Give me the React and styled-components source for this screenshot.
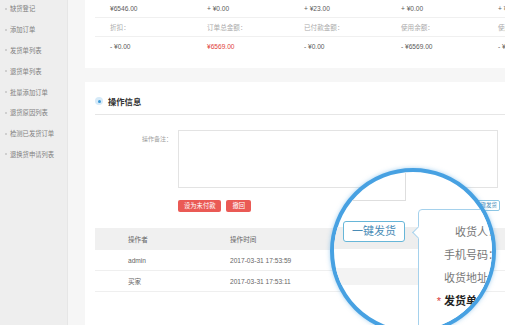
import React from 'react'
import styled, { createGlobalStyle } from 'styled-components'

const Global = createGlobalStyle`
  html, body {
    margin: 0;
    padding: 0;
    width: 505px;
    height: 325px;
    overflow: hidden;
    background: #f6f6f6;
    font-family: "Liberation Sans", "Noto Sans CJK SC", sans-serif;
  }
`

const Page = styled.div`
  position: relative;
  display: flex;
  width: 505px;
  height: 325px;
  overflow: hidden;
`

const Sidebar = styled.ul`
  width: 68px;
  flex: none;
  margin: 0;
  padding: 0;
  list-style: none;
  background: #eeeeee;
  box-shadow: inset -1px 0 0 #e6e6e6;
`

const NavItem = styled.li`
  display: flex;
  align-items: center;
  height: 20.8px;
  gap: 3px;
  padding-left: 5px;
  font-size: 6.3px;
  color: #808080;
  white-space: nowrap;
  &:first-child { margin-top: -1.5px; }
  &::before {
    content: '';
    width: 2px;
    height: 2px;
    border-radius: 50%;
    background: #c4c4c4;
  }
`

const Main = styled.div`
  flex: 1;
  min-width: 0;
  display: flex;
  flex-direction: column;
  padding-left: 17px;
  background: #f6f6f6;
  overflow: hidden;
`

const SummaryCard = styled.div`
  flex: none;
  height: 69px;
  margin-top: -1px;
  padding-left: 10px;
  background: #fff;
`

const SummaryRow = styled.div`
  display: grid;
  grid-template-columns: repeat(5, 97px);
  align-items: center;
  height: 18px;
  padding-left: 15px;
  border-bottom: 1px solid ${p => (p.$last ? 'transparent' : '#f0f0f0')};
  font-size: 6.6px;
  white-space: nowrap;
`

const Cell = styled.span`
  color: ${p => p.$tone === 'label' ? '#ababab' : p.$tone === 'red' ? '#e0403a' : '#5a5a5a'};
`

const OpsCard = styled.div`
  flex: 1;
  margin-top: 14px;
  padding-left: 10px;
  background: #fff;
`

const SectionHead = styled.div`
  display: flex;
  align-items: center;
  gap: 5px;
  height: 14px;
  padding: 12px 0 6px;
  border-bottom: 1px solid #e6e6e6;
  font-size: 8.3px;
  font-weight: bold;
  color: #333;
`

const HeadIcon = styled.span`
  width: 8px;
  height: 8px;
  border-radius: 50%;
  background: #d6eaf8;
  display: flex;
  align-items: center;
  justify-content: center;
  &::after {
    content: '';
    width: 3px;
    height: 3px;
    border-radius: 50%;
    background: #3c9ad8;
  }
`

const FormRow = styled.div`
  display: flex;
  gap: 6px;
  margin-top: 15px;
`

const FormLabel = styled.label`
  width: 77px;
  padding-top: 4px;
  text-align: right;
  font-size: 6px;
  color: #a0a0a0;
  white-space: nowrap;
`

const Remark = styled.div`
  width: 320px;
  height: 58px;
  border: 1px solid #e3e3e3;
  box-sizing: border-box;
`

const ActionRow = styled.div`
  display: flex;
  gap: 5px;
  width: 322px;
  margin-top: 12px;
  margin-left: 83px;
`

const RedButton = styled.button`
  height: 12px;
  padding: 0 6px;
  border: none;
  border-radius: 2px;
  background: #ea5a55;
  color: #fff;
  font-family: inherit;
  font-size: 6.3px;
  line-height: 12px;
`

const ShipButton = styled.button`
  margin-left: auto;
  height: 11px;
  padding: 0 2px;
  border: 1px solid #8cc6e4;
  border-radius: 2px;
  background: #fff;
  color: #4d91bb;
  font-family: inherit;
  font-size: 5.5px;
  line-height: 9px;
`

const LogTable = styled.div`
  margin-top: 16px;
  font-size: 6.6px;
  color: #666;
`

const LogRow = styled.div`
  display: grid;
  grid-template-columns: 135px 1fr;
  align-items: center;
  height: ${p => (p.$head ? 21 : 20)}px;
  background: ${p => (p.$head ? '#f0f0f0' : '#fff')};
  border-bottom: 1px solid ${p => (p.$head ? '#f0f0f0' : '#efefef')};
  white-space: nowrap;
  & > span:first-child { padding-left: 33px; }
`

/* magnifier lens laid over the page */
const Lens = styled.div`
  position: absolute;
  left: 330px;
  top: 168px;
  width: 166px;
  height: 166px;
  box-sizing: border-box;
  border: 4px solid #47a1e2;
  border-radius: 50%;
  overflow: hidden;
  background: #fff;
  box-shadow: 0 0 4px rgba(71, 161, 226, 0.5);
`

const LensCorner = styled.div`
  position: absolute;
  left: -10px;
  top: -10px;
  width: 81px;
  height: 38px;
  border-right: 1px solid #dedede;
  border-bottom: 1px solid #dedede;
`

const LensBand = styled.div`
  position: absolute;
  left: 0;
  top: ${p => p.$top}px;
  width: 90px;
  height: ${p => p.$h}px;
  background: ${p => p.$bg};
`

const LensButton = styled.div`
  position: absolute;
  left: 9px;
  top: 49px;
  width: 62px;
  height: 21px;
  box-sizing: border-box;
  border: 1.5px solid #67b6d8;
  border-radius: 3px;
  background: #fff;
  color: #4a8cb6;
  font-size: 11px;
  line-height: 18px;
  text-align: center;
`

const Popover = styled.div`
  position: absolute;
  left: 84px;
  top: 37px;
  width: 130px;
  height: 160px;
  box-sizing: border-box;
  padding-top: 11px;
  border: 1px solid #a5d1ec;
  border-radius: 4px;
  background: #fff;
  &::before {
    content: '';
    position: absolute;
    left: -5px;
    top: 18px;
    width: 8px;
    height: 8px;
    background: #fff;
    border-left: 1px solid #a5d1ec;
    border-bottom: 1px solid #a5d1ec;
    transform: rotate(45deg);
  }
`

const PopRow = styled.div`
  width: 80px;
  height: 23px;
  line-height: 23px;
  text-align: right;
  font-size: 11px;
  white-space: nowrap;
  color: ${p => (p.$strong ? '#222' : '#777')};
  font-weight: ${p => (p.$strong ? 'bold' : 'normal')};
`

const Star = styled.span`
  color: #d9383a;
  font-weight: normal;
  margin-right: 3px;
`

const navItems = ['缺货登记', '添加订单', '发货单列表', '退货单列表', '批量添加订单', '退货原因列表', '检测已发货订单', '退换货申请列表']

const summary = [
  [['¥6546.00'], ['+ ¥0.00'], ['+ ¥23.00'], ['+ ¥0.00'], ['+ ¥0.00']],
  [['折扣：', 'label'], ['订单总金额：', 'label'], ['已付款金额：', 'label'], ['使用余额：', 'label'], ['使用积分：', 'label']],
  [['- ¥0.00'], ['¥6569.00', 'red'], ['- ¥0.00'], ['- ¥6569.00'], ['- ¥0.00']]
]

const logs = [
  ['admin', '2017-03-31 17:53:59'],
  ['买家', '2017-03-31 17:53:11']
]

const App = () => (
  <Page>
    <Global/>
    <Sidebar>
      {navItems.map(n => <NavItem key={n}>{n}</NavItem>)}
    </Sidebar>
    <Main>
      <SummaryCard>
        {summary.map((row, i) => (
          <SummaryRow key={i} $last={i === summary.length - 1}>
            {row.map(([text, tone], j) => <Cell key={j} $tone={tone}>{text}</Cell>)}
          </SummaryRow>
        ))}
      </SummaryCard>
      <OpsCard>
        <SectionHead><HeadIcon/>操作信息</SectionHead>
        <FormRow>
          <FormLabel>操作备注：</FormLabel>
          <Remark/>
        </FormRow>
        <ActionRow>
          <RedButton>设为未付款</RedButton>
          <RedButton>撤回</RedButton>
          <ShipButton>一键发货</ShipButton>
        </ActionRow>
        <LogTable>
          <LogRow $head><span>操作者</span><span>操作时间</span></LogRow>
          {logs.map(([who, when]) => (
            <LogRow key={when}><span>{who}</span><span>{when}</span></LogRow>
          ))}
        </LogTable>
      </OpsCard>
    </Main>
    <Lens>
      <LensCorner/>
      <LensBand $top={55} $h={22} $bg="#eeeeee"/>
      <LensBand $top={96} $h={17} $bg="#f3f3f3"/>
      <LensButton>一键发货</LensButton>
      <Popover>
        <PopRow>收货人：</PopRow>
        <PopRow>手机号码：</PopRow>
        <PopRow>收货地址：</PopRow>
        <PopRow $strong><Star>*</Star>发货单号：</PopRow>
      </Popover>
    </Lens>
  </Page>
)

export default App
